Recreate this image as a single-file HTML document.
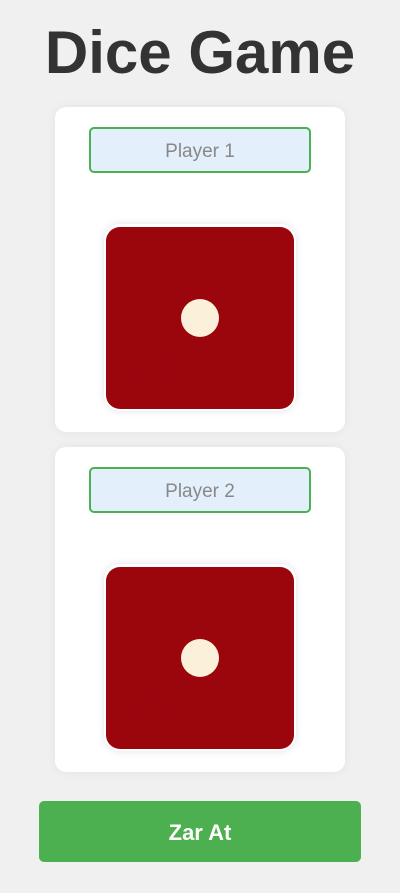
<!DOCTYPE html>
<html><head><style>
body{margin:0;width:400px;height:893px;background:#f0f0f0;font-family:"Liberation Sans",sans-serif;position:relative;overflow:hidden}
h1{position:absolute;top:17px;left:0;width:400px;margin:0;text-align:center;font-size:60px;font-weight:bold;color:#333;line-height:72px}
.card{position:absolute;left:55px;width:290px;height:325px;background:#fff;border-radius:11px;box-shadow:0 0 10px rgba(0,0,0,.06)}
.inp{position:absolute;left:34px;top:20px;width:218px;height:42px;border:2px solid #4caf50;border-radius:5px;background:#e3effa;color:#888;font-size:19px;text-align:center;line-height:46px}
.die{position:absolute;left:49px;top:117px;width:192px;height:187px;background:#fff;border-radius:16px;box-shadow:0 0 8px rgba(0,0,0,.12)}
.red{position:absolute;left:2px;top:3px;width:188px;height:182px;background:#9b050c;border-radius:14px}
.pip{position:absolute;width:38px;height:38px;border-radius:50%}
.btn{position:absolute;left:39px;top:801px;width:322px;height:61px;background:#4caf50;border-radius:5px;color:#fff;font-weight:bold;font-size:22px;text-align:center;line-height:63px}
</style></head><body>
<h1>Dice Game</h1>
<div class="card" style="top:107px"><div class="inp">Player 1</div>
<div class="die"><div class="red">
<div class="pip" style="left:75px;top:72px;background:#fbf0d9"></div>
<div class="pip" style="left:127px;top:20px;border:1px solid #960a0f;width:36px;height:36px"></div>
<div class="pip" style="left:24px;top:122px;border:1px solid #960a0f;width:36px;height:36px"></div>
</div></div></div>
<div class="card" style="top:447px"><div class="inp">Player 2</div>
<div class="die"><div class="red">
<div class="pip" style="left:75px;top:72px;background:#fbf0d9"></div>
<div class="pip" style="left:127px;top:20px;border:1px solid #960a0f;width:36px;height:36px"></div>
<div class="pip" style="left:24px;top:122px;border:1px solid #960a0f;width:36px;height:36px"></div>
</div></div></div>
<div class="btn">Zar At</div>
</body></html>
